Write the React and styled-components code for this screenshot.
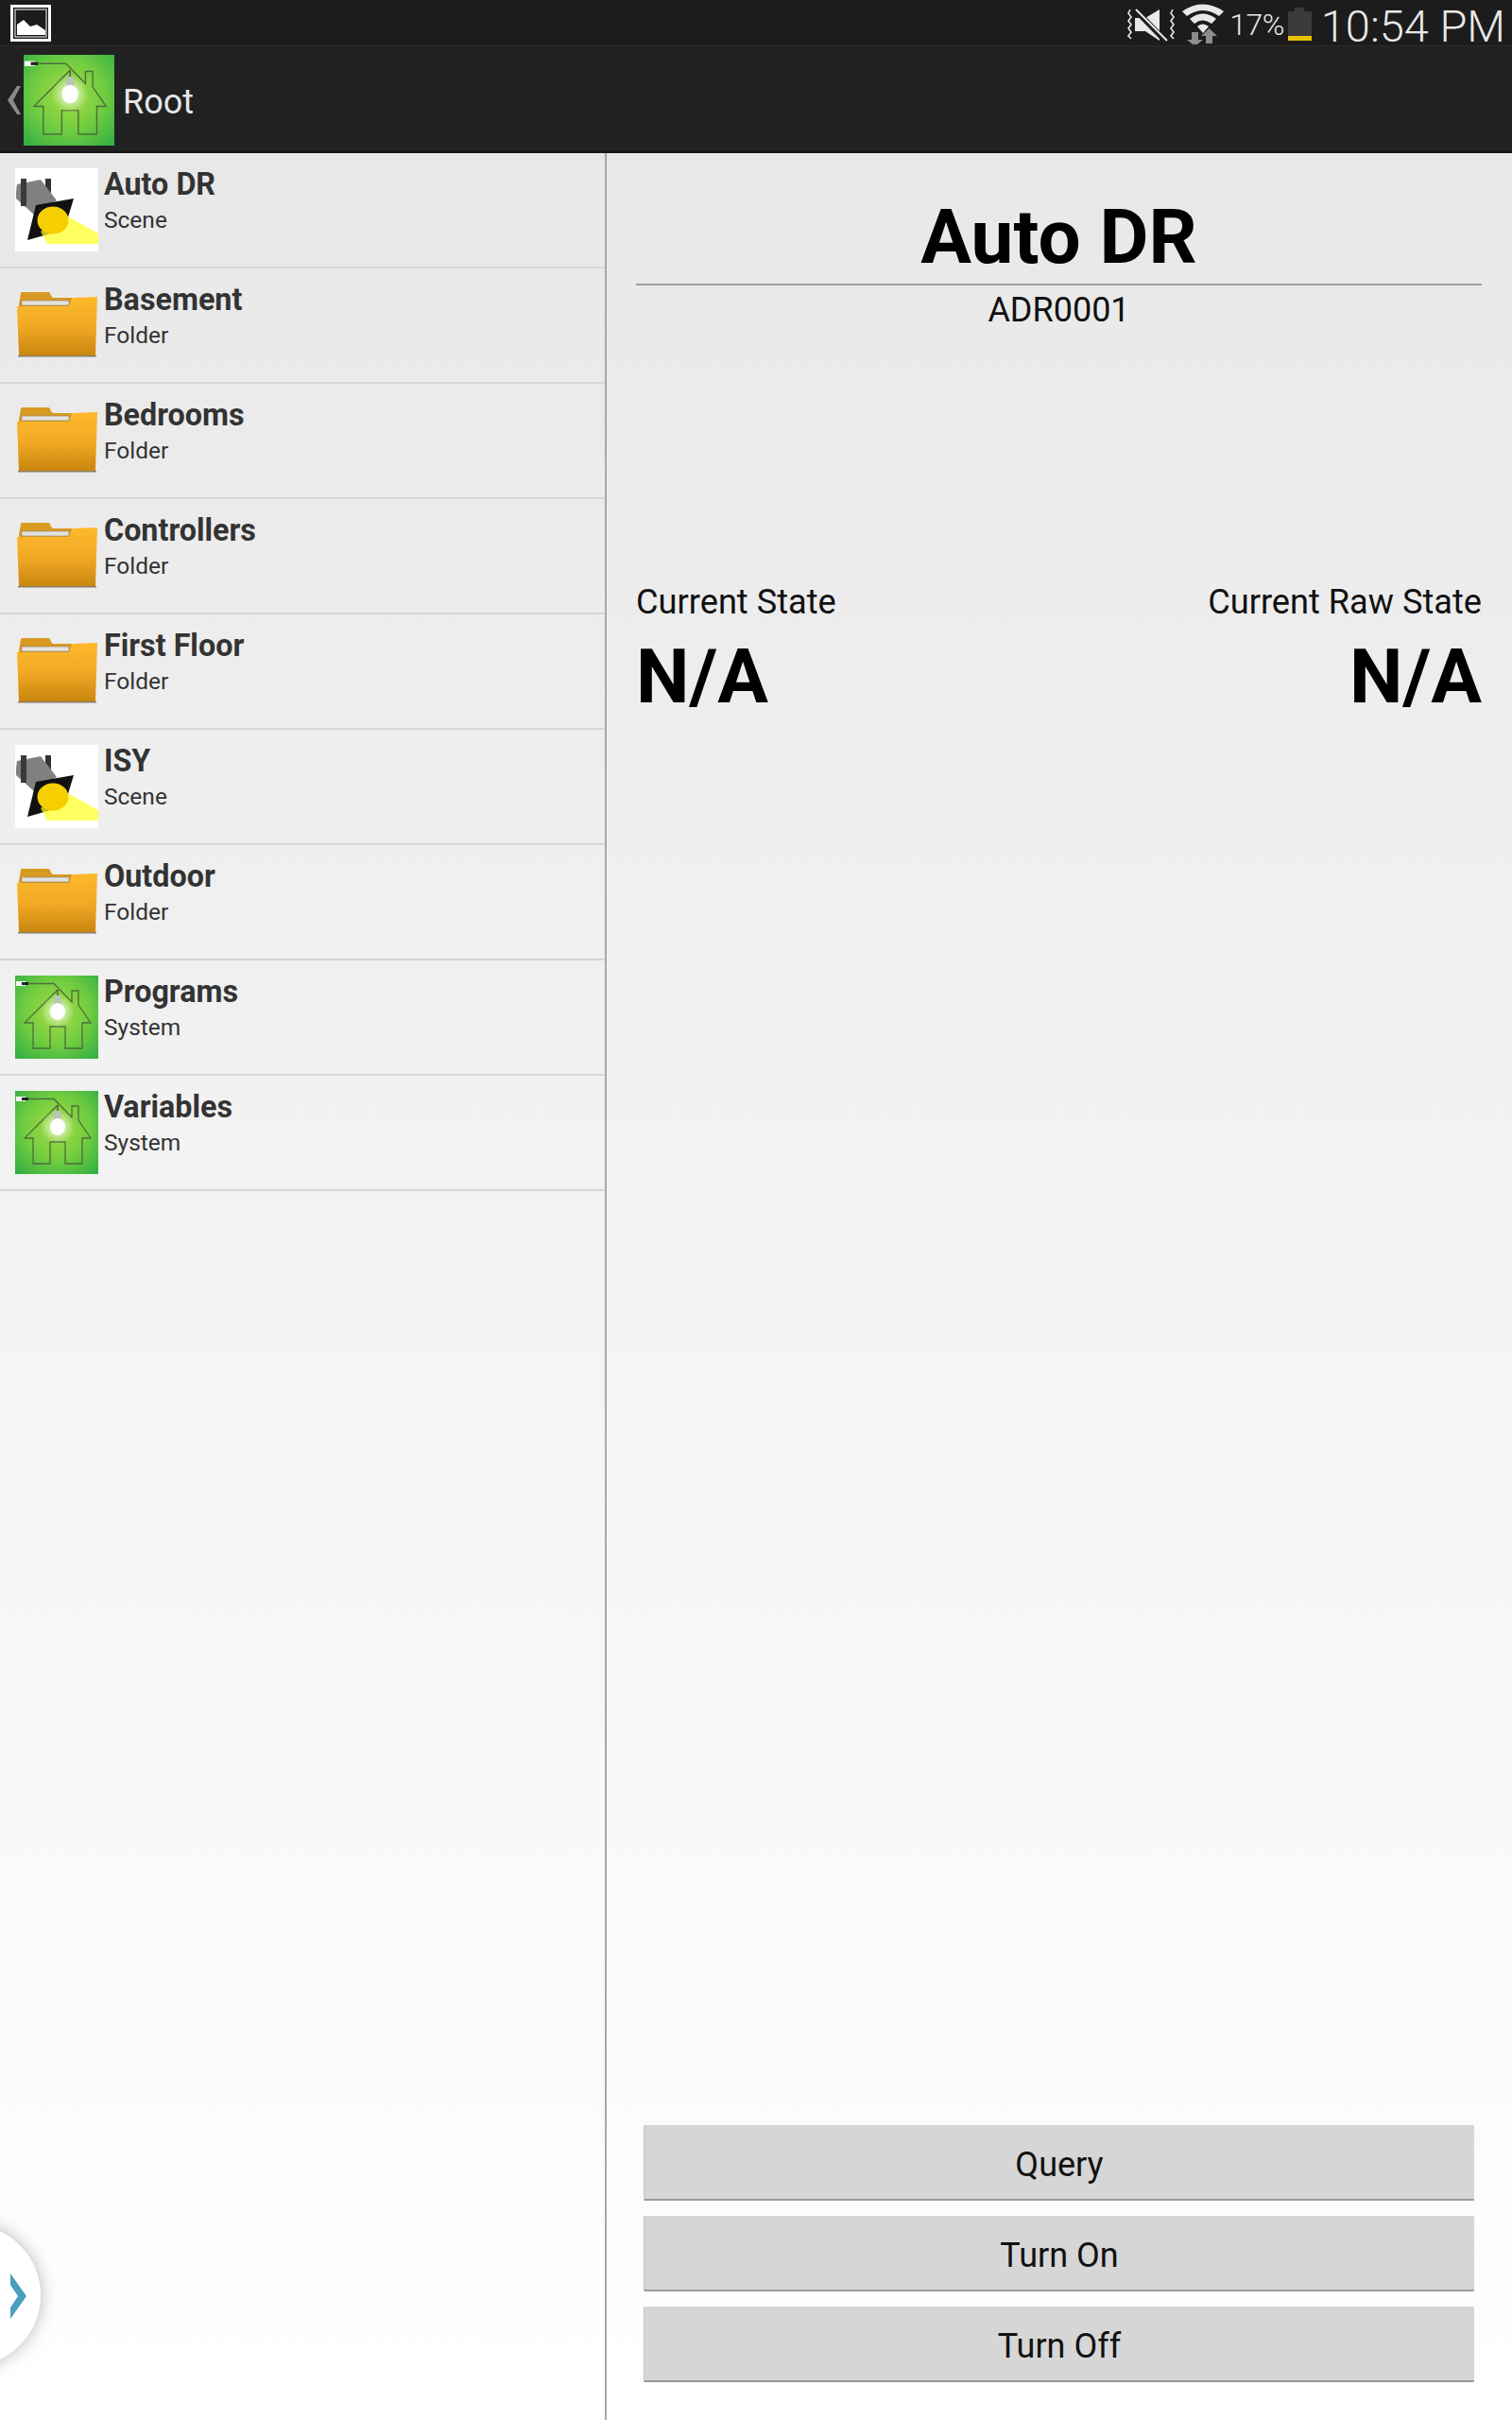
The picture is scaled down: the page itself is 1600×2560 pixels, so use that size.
import React from "react";
import styled, { createGlobalStyle } from "styled-components";

const Global = createGlobalStyle`
  html, body { margin: 0; padding: 0; background: #fff; }
  body { font-family: Roboto, "Liberation Sans", sans-serif; }
`;

const Page = styled.div`
  position: relative;
  width: 1600px;
  height: 2560px;
  display: flex;
  flex-direction: column;
  overflow: hidden;
`;

const StatusBar = styled.header`
  height: 49px;
  flex: none;
  box-sizing: border-box;
  background: #1c1c1c;
  border-bottom: 1px solid #2a2a2a;
  display: flex;
  align-items: flex-start;
  padding: 0 7px 0 11px;
  color: #e8e8e8;
`;

const StatusRight = styled.div`
  margin-left: auto;
  display: flex;
  align-items: flex-start;
`;

const Percent = styled.span`
  font-size: 32px;
  font-weight: 300;
  line-height: 44px;
  margin: 4px 4px 0 6px;
  letter-spacing: -0.5px;
`;

const Clock = styled.span`
  font-size: 47px;
  font-weight: 300;
  line-height: 44px;
  margin: 6px 0 0 10px;
  white-space: nowrap;
`;

const StatusIcon = styled.svg`
  display: block;
  flex: none;
  margin-top: ${(p) => p.$top}px;
  margin-left: ${(p) => p.$left || 0}px;
`;

const ActionBar = styled.div`
  height: 113px;
  flex: none;
  box-sizing: border-box;
  background: #212121;
  border-bottom: 2px solid #161616;
  display: flex;
  align-items: center;
  padding: 3px 0 0 8px;
`;

const BackChevron = styled.svg`
  display: block;
  margin-right: 3px;
`;

const AppIcon = styled.svg`
  display: block;
  flex: none;
  width: ${(p) => p.$size}px;
  height: ${(p) => p.$size}px;
`;

const AppTitle = styled.span`
  color: #e6e6e6;
  font-size: 36px;
  margin: 4px 0 0 9px;
`;

const Body = styled.div`
  flex: 1;
  display: flex;
  min-height: 0;
  background: linear-gradient(#e8e8e8 0%, #fdfdfd 92%, #ffffff 100%);
`;

const Sidebar = styled.nav`
  width: 642px;
  flex: none;
  box-sizing: border-box;
  border-right: 2px solid #a8a8a8;
`;

const Row = styled.div`
  height: 122px;
  box-sizing: border-box;
  border-bottom: 2px solid #d6d6d6;
  display: flex;
  padding: 16px 0 0 16px;
`;

const RowText = styled.div`
  margin-left: 6px;
  color: #333;
`;

const RowTitle = styled.div`
  font-size: 32.3px;
  font-weight: 700;
  line-height: 34px;
`;

const RowSub = styled.div`
  font-size: 24.5px;
  line-height: 28px;
  margin-top: 7px;
`;

const Detail = styled.main`
  flex: 1;
  display: flex;
  flex-direction: column;
  box-sizing: border-box;
  padding: 44px 32px 40px 31px;
`;

const Title = styled.h1`
  margin: 0;
  font-size: 80px;
  line-height: 90px;
  padding-bottom: 4px;
  font-weight: 700;
  color: #000;
  text-align: center;
  border-bottom: 2px solid #a0a0a0;
`;

const Address = styled.div`
  font-size: 36px;
  line-height: 52px;
  color: #111;
  text-align: center;
`;

const StateRow = styled.div`
  display: flex;
  justify-content: space-between;
  margin-top: 262px;
`;

const StateCol = styled.div`
  text-align: ${(p) => p.$align};
`;

const StateLabel = styled.div`
  font-size: 36.2px;
  line-height: 42px;
  color: #111;
`;

const StateValue = styled.div`
  font-size: 80px;
  line-height: 98px;
  font-weight: 700;
  color: #000;
  margin-top: 9px;
`;

const Buttons = styled.div`
  margin-top: auto;
  display: flex;
  flex-direction: column;
  gap: 16px;
  padding: 0 8px 0 8px;
`;

const Button = styled.button`
  height: 80px;
  border: 0;
  border-bottom: 2px solid #9a9a9a;
  border-left: 1px solid #c4c4c4;
  border-radius: 1px;
  background: #d6d6d6;
  color: #111;
  font-family: inherit;
  font-size: 36px;
  padding: 5px 0 0;
`;

const Handle = styled.div`
  position: absolute;
  left: -107px;
  top: 2353px;
  width: 150px;
  height: 150px;
  border-radius: 50%;
  background: #fff;
  box-shadow: 0 0 18px rgba(0, 0, 0, 0.28);
`;

const HandleChevron = styled.svg`
  position: absolute;
  left: 118px;
  top: 52px;
`;

function HouseIcon({ size, id }) {
  return (
    <AppIcon $size={size} viewBox="0 0 88 88">
      <defs>
        <radialGradient id={`bg${id}`} cx="50%" cy="45%" r="70%">
          <stop offset="0" stopColor="#a6dc45" />
          <stop offset="0.55" stopColor="#72cd40" />
          <stop offset="1" stopColor="#35b044" />
        </radialGradient>
        <radialGradient id={`glow${id}`}>
          <stop offset="0" stopColor="#fff" stopOpacity="0.9" />
          <stop offset="0.5" stopColor="#fff" stopOpacity="0.45" />
          <stop offset="1" stopColor="#fff" stopOpacity="0" />
        </radialGradient>
      </defs>
      <rect width="88" height="88" fill={`url(#bg${id})`} />
      <rect x="1" y="6" width="10" height="5" fill="#f4f4f4" />
      <rect x="7" y="7" width="7" height="3" fill="#222" />
      <path
        d="M14 8.500H41L60 28V16H67V31L80 50H71V77H53V54H37V77H19V50H10L45 15"
        fill="none"
        stroke="#4e6e3a"
        strokeWidth="1.300"
      />
      <circle cx="45" cy="38" r="18" fill={`url(#glow${id})`} />
      <rect x="44.500" y="15" width="1" height="8" fill="#333" />
      <path d="M41.500 21h7l.5 10h-8z" fill="#b9c4b5" />
      <ellipse cx="45" cy="38" rx="8" ry="9" fill="#fff" />
    </AppIcon>
  );
}

function SceneIcon() {
  return (
    <AppIcon $size={88} viewBox="0 0 88 88">
      <rect width="88" height="88" fill="#fff" />
      <rect x="32" y="11" width="6" height="16" fill="#333" />
      <path d="M1 25L2 17L27 12L44 34L20 49L1 32Z" fill="#808080" />
      <rect x="6" y="11" width="6" height="29" fill="#3a3a3a" />
      <path d="M22 39L62 32L52 65L13 76Z" fill="#111" />
      <path d="M52 49L88 69V80H34L27 67Z" fill="#ffff22" fillOpacity="0.72" />
      <ellipse cx="40" cy="55" rx="16.500" ry="14.500" fill="#f6cf00" />
    </AppIcon>
  );
}

function FolderIcon({ id }) {
  return (
    <AppIcon $size={88} viewBox="0 0 88 88">
      <defs>
        <linearGradient id={`f${id}`} x1="0" y1="0" x2="0" y2="1">
          <stop offset="0" stopColor="#fdb92b" />
          <stop offset="0.5" stopColor="#f2a925" />
          <stop offset="1" stopColor="#c9860e" />
        </linearGradient>
      </defs>
      <path d="M4 22L6 10Q6 9 8 9H35Q37 9 38 13L40 15H60V30H4Z" fill="#d99a22" />
      <rect x="7" y="18" width="50" height="5" fill="#e4e2da" stroke="#8a8474" strokeWidth="0.600" />
      <path d="M2 24H57L60 16Q60 15 62 15L87 14L85 76H4Z" fill={`url(#f${id})`} />
      <rect x="3" y="76" width="83" height="1.500" fill="#8a7d68" />
    </AppIcon>
  );
}

const items = [
  ["Auto DR", "Scene", "scene"],
  ["Basement", "Folder", "folder"],
  ["Bedrooms", "Folder", "folder"],
  ["Controllers", "Folder", "folder"],
  ["First Floor", "Folder", "folder"],
  ["ISY", "Scene", "scene"],
  ["Outdoor", "Folder", "folder"],
  ["Programs", "System", "house"],
  ["Variables", "System", "house"],
];

function RowIcon({ kind, id }) {
  if (kind === "scene") return <SceneIcon />;
  if (kind === "folder") return <FolderIcon id={id} />;
  return <HouseIcon size={88} id={id} />;
}

export default function App() {
  return (
    <Page>
      <Global />
      <StatusBar>
        <StatusIcon $top={5} width="43" height="39" viewBox="0 0 43 39">
          <rect x="1.500" y="1.500" width="40" height="36" fill="none" stroke="#fff" strokeWidth="3" />
          <rect x="5" y="5" width="33" height="29" fill="none" stroke="#fff" strokeWidth="1" />
          <path d="M7 32V21L14 16L21 23L28 21L37 27V32Z" fill="#fff" />
        </StatusIcon>
        <StatusRight>
          <StatusIcon $top={9} width="52" height="36" viewBox="0 0 52 36">
            <path d="M8 10H19L34 1V34L19 24H8Z" fill="#e8e8e8" />
            <path d="M7 0L40 34" stroke="#1c1c1c" strokeWidth="6" />
            <path d="M9 1L42 34" stroke="#e8e8e8" strokeWidth="2" />
            <path
              d="M3 1l-2 4 3 4-3 4 3 4-3 4 3 4-3 4 3 3M48 1l-2 4 3 4-3 4 3 4-3 4 3 4-3 4 3 3"
              fill="none"
              stroke="#e8e8e8"
              strokeWidth="1.600"
            />
          </StatusIcon>
          <StatusIcon $top={3} $left={6} width="44" height="44" viewBox="0 0 44 44">
            <path d="M0 9Q22-6 44 9L39 14Q22 2 5 14Z" fill="#e8e8e8" />
            <path d="M8 17Q22 6 36 17L31 22Q22 15 13 22Z" fill="#e8e8e8" />
            <path d="M16 25Q22 20 28 25L22 32Z" fill="#e8e8e8" />
            <path d="M10 31H17V39H22L13.500 46L5 39H10Z" fill="#8c8c8c" />
            <path d="M25 43V35H20L28.500 27L37 35H32V43Z" fill="#8c8c8c" />
          </StatusIcon>
          <Percent>17%</Percent>
          <StatusIcon $top={8} width="25" height="36" viewBox="0 0 25 36">
            <rect x="7" y="0" width="10" height="4" fill="#3a3a3a" />
            <rect x="0" y="4" width="25" height="26" fill="#3a3a3a" />
            <rect x="0" y="30" width="25" height="5" fill="#e9c400" />
          </StatusIcon>
          <Clock>10:54 PM</Clock>
        </StatusRight>
      </StatusBar>
      <ActionBar>
        <BackChevron width="14" height="30" viewBox="0 0 14 30">
          <path d="M10 0H14L6 15L14 30H10L0 15Z" fill="#8a8a8a" />
        </BackChevron>
        <HouseIcon size={96} id="app" />
        <AppTitle>Root</AppTitle>
      </ActionBar>
      <Body>
        <Sidebar>
          {items.map(([title, sub, kind], i) => (
            <Row key={title}>
              <RowIcon kind={kind} id={i} />
              <RowText>
                <RowTitle>{title}</RowTitle>
                <RowSub>{sub}</RowSub>
              </RowText>
            </Row>
          ))}
        </Sidebar>
        <Detail>
          <Title>Auto DR</Title>
          <Address>ADR0001</Address>
          <StateRow>
            <StateCol $align="left">
              <StateLabel>Current State</StateLabel>
              <StateValue>N/A</StateValue>
            </StateCol>
            <StateCol $align="right">
              <StateLabel>Current Raw State</StateLabel>
              <StateValue>N/A</StateValue>
            </StateCol>
          </StateRow>
          <Buttons>
            <Button>Query</Button>
            <Button>Turn On</Button>
            <Button>Turn Off</Button>
          </Buttons>
        </Detail>
      </Body>
      <Handle>
        <HandleChevron width="17" height="48" viewBox="0 0 17 48">
          <path d="M0 0L17 24L0 48V36L8 24L0 12Z" fill="#4a9fbd" />
        </HandleChevron>
      </Handle>
    </Page>
  );
}
